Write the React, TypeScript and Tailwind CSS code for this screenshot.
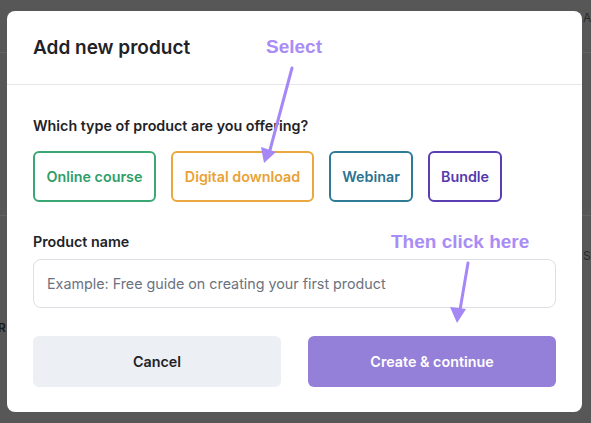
import React from 'react';

const types = [
  { label: 'Online course', w: 'w-[123px]', cls: 'border-[#3aa775] text-[#2f9e6a]' },
  { label: 'Digital download', w: 'w-[143px]', cls: 'border-[#eaa83e] text-[#e9a236]' },
  { label: 'Webinar', w: 'w-[84px]', cls: 'border-[#2f7b95] text-[#2b7391]' },
  { label: 'Bundle', w: 'w-[74px]', cls: 'border-[#5b3fb2] text-[#5639ad]' },
];

const App = () => {
  return (
    <div className="relative h-[423px] w-[591px] overflow-hidden bg-[#575757] pl-[7px] pt-[11px] font-['Inter',sans-serif]">
      {/* dimmed page behind the modal */}
      <div className="absolute left-0 right-0 top-[52px] h-px bg-[#626262]" />
      <div className="absolute left-0 right-0 top-[215px] h-px bg-[#626262]" />
      <span className="absolute left-[583px] top-[9px] text-[12px] text-[#2a2a2a]">A</span>
      <span className="absolute left-[583px] top-[247px] text-[12px] text-[#2a2a2a]">S</span>
      <span className="absolute left-[-2px] top-[319px] text-[12px] font-semibold text-[#1a1a1a]">R</span>

      <div className="relative flex h-[401px] w-[575px] flex-col rounded-lg bg-white">
        <div className="flex h-[74px] items-center border-b border-[#e5e7eb] px-[26px] pt-[2px]">
          <h2 className="text-[19px] font-semibold text-[#1f2328]">Add new product</h2>
        </div>

        <div className="flex flex-col px-[26px] pt-[31px] text-[14.3px]">
          <p className="font-semibold leading-5 text-[#1f2328]">Which type of product are you offering?</p>
          <div className="mt-[15px] flex gap-[15px]">
            {types.map((t) => (
              <button
                key={t.label}
                className={`flex h-[51px] items-center justify-center rounded-md border-2 bg-white font-semibold ${t.w} ${t.cls}`}
              >
                {t.label}
              </button>
            ))}
          </div>

          <label className="mt-[30px] font-semibold leading-5 text-[#1f2328]">Product name</label>
          <div className="mt-[7px] flex h-[49px] items-center rounded-lg border border-[#dcdfe4] px-[13px]">
            <span className="text-[#6b7280]">Example: Free guide on creating your first product</span>
          </div>

          <div className="mt-[28px] grid grid-cols-2 gap-[27px]">
            <button className="h-[51px] rounded-md bg-[#eceff3] font-semibold text-[#1f2328]">Cancel</button>
            <button className="h-[51px] rounded-md bg-[#9580d9] font-semibold text-white">Create &amp; continue</button>
          </div>
        </div>
      </div>

      {/* annotations */}
      <span className="absolute left-[266px] top-[36px] font-['Liberation_Sans',Arial,sans-serif] text-[19px] font-bold leading-[22px] text-[#a98cf6]">
        Select
      </span>
      <span className="absolute left-[391px] top-[231px] font-['Liberation_Sans',Arial,sans-serif] text-[19px] font-bold leading-[22px] text-[#a98cf6]">
        Then click here
      </span>
      <svg className="pointer-events-none absolute left-0 top-0" width="591" height="423" viewBox="0 0 591 423">
        <line x1="292" y1="68" x2="270" y2="150" stroke="#a587f5" strokeWidth="3" strokeLinecap="round" />
        <polygon points="264,163 261,147 276,152" fill="#a587f5" />
        <line x1="468" y1="263" x2="460" y2="310" stroke="#a587f5" strokeWidth="3" strokeLinecap="round" />
        <polygon points="457,323 450,307 466,309" fill="#a587f5" />
      </svg>
    </div>
  );
};

export default App;
